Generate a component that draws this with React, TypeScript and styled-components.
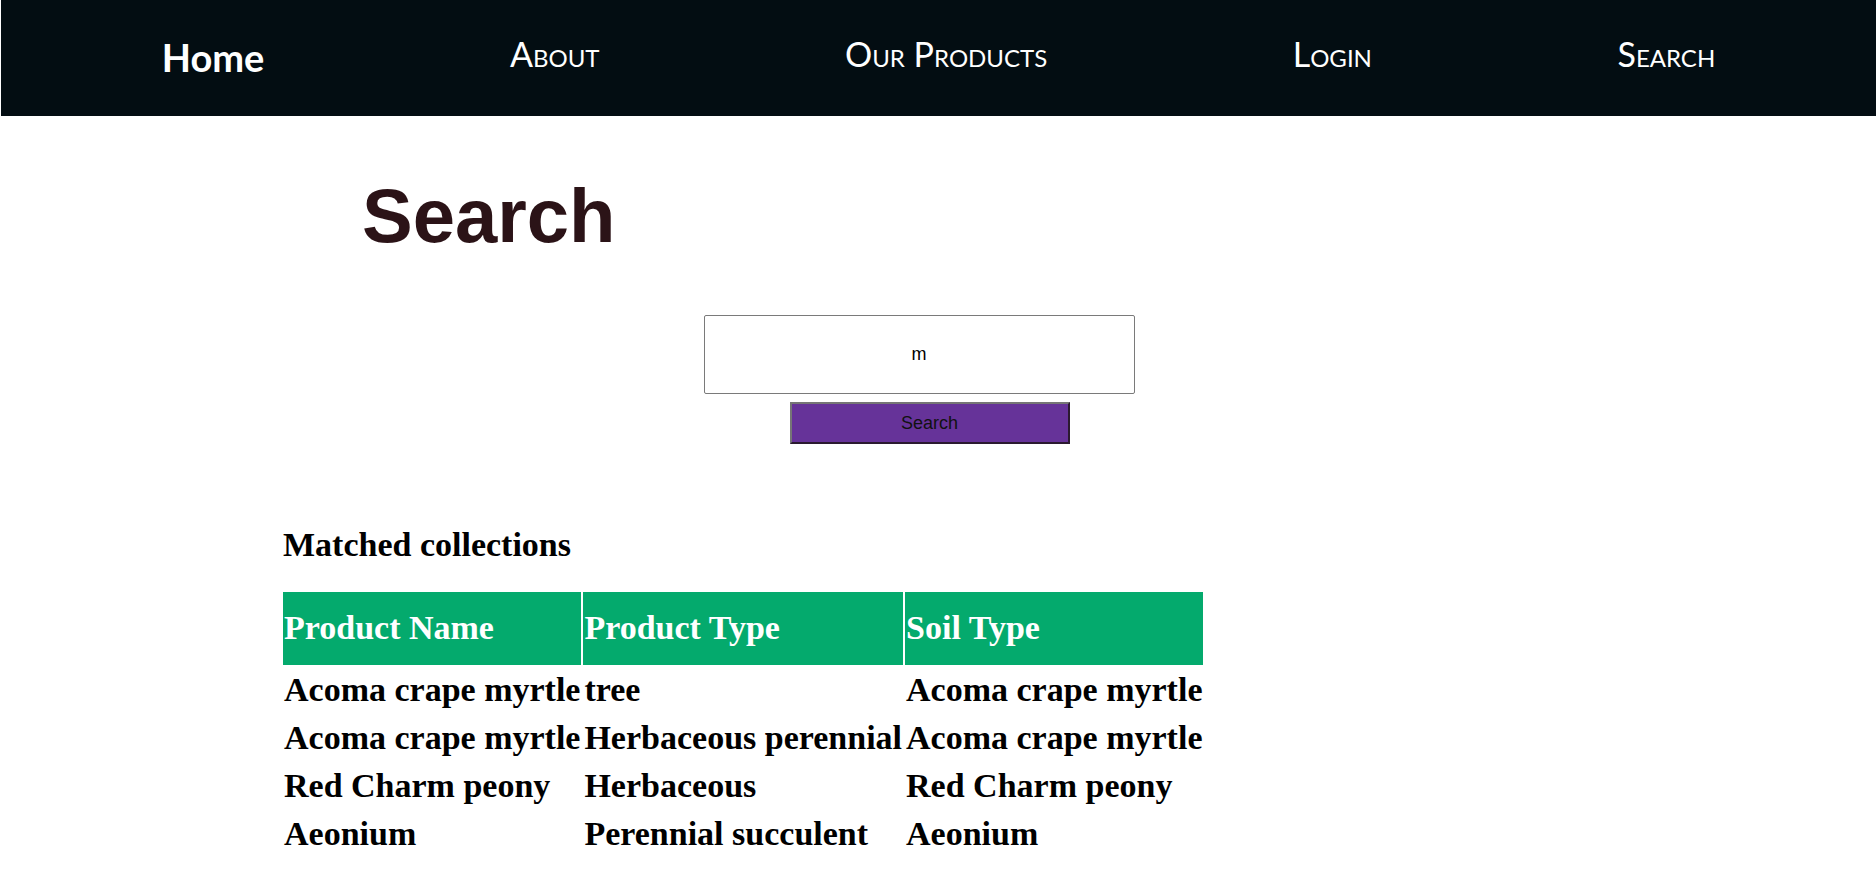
import React, { useState } from "react";
import styled, { createGlobalStyle } from "styled-components";

const GlobalStyle = createGlobalStyle`
  body {
    margin: 0;
    background: #fff;
    font-family: "Liberation Serif", "Times New Roman", serif;
  }
`;

const NavBar = styled.nav`
  height: 116px;
  margin-left: 1px;
  padding: 0 38px;
  background-color: #030d12;
  display: flex;
  align-items: center;
  justify-content: space-around;
`;

const NavLink = styled.a<{ brand?: boolean }>`
  color: #fff;
  text-decoration: none;
  font-family: Lato, "Open Sans", sans-serif;
  font-size: ${props => (props.brand ? "38px" : "34px")};
  font-weight: ${props => (props.brand ? 700 : 400)};
  font-variant: ${props => (props.brand ? "normal" : "small-caps")};
  margin-top: ${props => (props.brand ? "-2px" : "-10px")};
  cursor: pointer;
`;

const Title = styled.h1`
  margin: 0;
  padding: 56px 0 0 362px;
  font-family: "Liberation Sans", Arial, sans-serif;
  font-size: 76px;
  font-weight: 700;
  line-height: 88px;
  color: #2b1317;
`;

const SearchForm = styled.form`
  display: flex;
  flex-direction: column;
  align-items: center;
  padding-right: 38px;
  margin-top: 55px;
`;

const SearchInput = styled.input`
  box-sizing: border-box;
  width: 431px;
  height: 79px;
  border: 1px solid #7a7a7a;
  border-radius: 2px;
  text-align: center;
  font-family: "Liberation Sans", Arial, sans-serif;
  font-size: 18px;
  color: #000;
  outline: none;
`;

const SearchButton = styled.button`
  box-sizing: border-box;
  width: 280px;
  height: 42px;
  margin: 8px 0 0 21px;
  background-color: #663399;
  border-style: solid;
  border-width: 2px;
  border-color: #767676 #2b1a30 #2b1a30 #767676;
  font-family: "Liberation Sans", Arial, sans-serif;
  font-size: 18px;
  color: #111;
  cursor: pointer;
`;

const Results = styled.section`
  padding: 0 0 40px 281px;
`;

const ResultsHeading = styled.h3`
  margin: 81px 0 26px 2px;
  font-size: 34px;
  font-weight: 700;
  line-height: 39px;
  color: #000;
`;

const Table = styled.table`
  border-spacing: 2px;
  font-size: 34px;
  font-weight: 700;
`;

const HeadCell = styled.th`
  background-color: #04aa6d;
  color: #fff;
  text-align: left;
  padding: 16px 1px 18px;
  line-height: 39px;
`;

const Cell = styled.td`
  padding: 3px 1px 4px;
  line-height: 39px;
  white-space: nowrap;
`;

type Plant = { name: string; type: string; soil: string };

const plants: Plant[] = [
  { name: "Acoma crape myrtle", type: "tree", soil: "Acoma crape myrtle" },
  {
    name: "Acoma crape myrtle",
    type: "Herbaceous perennial",
    soil: "Acoma crape myrtle"
  },
  { name: "Red Charm peony", type: "Herbaceous", soil: "Red Charm peony" },
  { name: "Aeonium", type: "Perennial succulent", soil: "Aeonium" }
];

const App = () => {
  const [term, setTerm] = useState("m");

  const handleOnSubmit = (e: React.FormEvent<HTMLFormElement>) => {
    e.preventDefault();
  };

  return (
    <>
      <GlobalStyle />
      <NavBar>
        <NavLink brand>Home</NavLink>
        <NavLink>About</NavLink>
        <NavLink>Our Products</NavLink>
        <NavLink>Login</NavLink>
        <NavLink>Search</NavLink>
      </NavBar>
      <Title>Search</Title>
      <SearchForm onSubmit={handleOnSubmit}>
        <SearchInput value={term} onChange={e => setTerm(e.target.value)} />
        <SearchButton type="submit">Search</SearchButton>
      </SearchForm>
      <Results>
        <ResultsHeading>Matched collections</ResultsHeading>
        <Table>
          <thead>
            <tr>
              <HeadCell>Product Name</HeadCell>
              <HeadCell>Product Type</HeadCell>
              <HeadCell>Soil Type</HeadCell>
            </tr>
          </thead>
          <tbody>
            {plants.map((p, i) => (
              <tr key={i}>
                <Cell>{p.name}</Cell>
                <Cell>{p.type}</Cell>
                <Cell>{p.soil}</Cell>
              </tr>
            ))}
          </tbody>
        </Table>
      </Results>
    </>
  );
};

export default App;
